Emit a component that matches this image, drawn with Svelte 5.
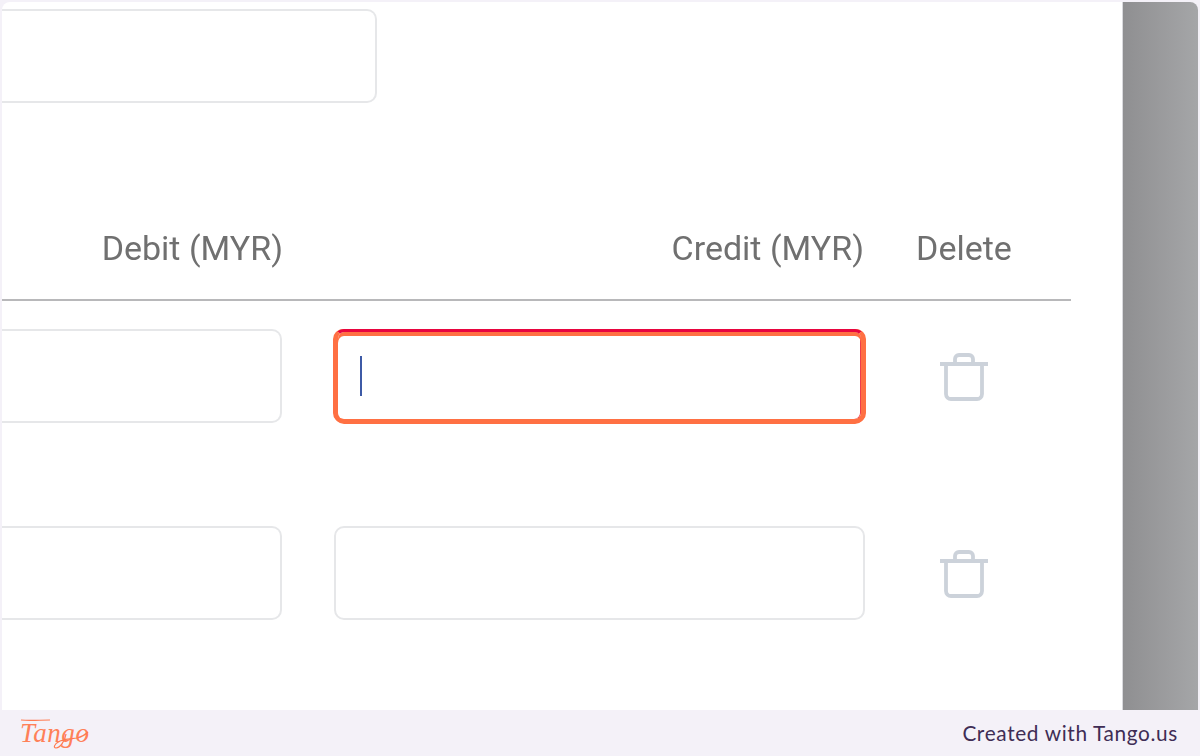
<script>
  // two blank entry rows, the first one has focus
  let rows = [{ focused: true }, { focused: false }];
</script>

<div class="shot">
  <div class="canvas">
    <main class="content">
      <div class="field top"></div>

      <div class="table">
        <div class="thead">
          <div class="th debit">Debit (MYR)</div>
          <div class="th credit">Credit (MYR)</div>
          <div class="th del">Delete</div>
        </div>

        {#each rows as row}
          <div class="row">
            <div class="field debitInput"></div>
            <div class="field creditInput" class:focused={row.focused}>
              {#if row.focused}
                <span class="caret"></span>
              {/if}
            </div>
            <div class="del">
              <svg class="trash" width="48" height="48" viewBox="0 0 48 48" fill="none" stroke="#ccd2da" stroke-width="3.8">
                <path d="M0 11h48" />
                <path d="M15 11V6a4 4 0 0 1 4-4h10a4 4 0 0 1 4 4v5" />
                <path d="M6 11v30a5 5 0 0 0 5 5h26a5 5 0 0 0 5-5V11" />
              </svg>
            </div>
          </div>
        {/each}
      </div>
    </main>
    <div class="scrim"></div>
  </div>

  <footer class="footer">
    <span class="logo">
      Tango
      <svg class="swash" width="70" height="34" viewBox="0 0 70 34" fill="none" stroke="#ff7a50" stroke-width="1.2">
        <path d="M1 4c9 1 19 0 29 0" />
        <path d="M46 18c-1 7-6 14-10 14-3 0-2-4 4-7 8-3 12-2 17-3 4-1 8-3 11-6" />
      </svg>
    </span>
    <span class="credit-line">Created with Tango.us</span>
  </footer>
</div>

<style>
  :global(body) {
    margin: 0;
    background: #f4f1f8;
  }

  .shot {
    width: 1200px;
    height: 756px;
    display: flex;
    flex-direction: column;
    background: #f4f1f8;
    overflow: hidden;
  }

  .canvas {
    flex: 1;
    display: flex;
    margin: 2px 2px 0 2px;
    border-radius: 8px 8px 0 0;
    overflow: hidden;
    min-height: 0;
  }

  .content {
    flex: 1;
    background: #fff;
    padding-top: 7px;
    min-width: 0;
  }

  .scrim {
    width: 75px;
    background: linear-gradient(90deg, #8f8f91 0%, #a5a6a8 100%);
    border-left: 1px solid #d9d9dd;
  }

  .field {
    box-sizing: border-box;
    height: 94px;
    border: 2px solid #e6e7e9;
    border-left: none;
    border-radius: 0 10px 10px 0;
    background: #fff;
  }

  .top {
    width: 375px;
    height: 94px;
  }

  .table {
    width: 1069px;
    margin-top: 99px;
  }

  .thead {
    display: grid;
    grid-template-columns: 332px 531px 206px;
    height: 97px;
    border-bottom: 2px solid #b8b8ba;
    font-family: Roboto, sans-serif;
    font-size: 34px;
    color: #707070;
  }

  .th {
    line-height: 92px;
    filter: blur(0.5px);
    white-space: nowrap;
  }

  .th.debit {
    width: 281px;
    text-align: right;
  }

  .th.credit {
    text-align: right;
    padding-right: 1px;
  }

  .del {
    text-align: center;
    padding-right: 8px;
  }

  .row {
    display: grid;
    grid-template-columns: 332px 531px 206px;
    height: 197px;
    padding-top: 28px;
    box-sizing: border-box;
    align-items: start;
  }

  .debitInput {
    width: 280px;
  }

  .creditInput {
    border-left: 2px solid #e6e7e9;
    border-radius: 10px;
    display: flex;
    align-items: center;
    padding-left: 24px;
  }

  .creditInput.focused {
    border: 4px solid #ff7043;
    border-top: 3px solid #e8043f;
    box-shadow:
      inset 0 4px 0 #ff7043,
      inset -1px 0 0 #ef3d4a,
      -1px 0 0 #ff7043,
      1px 0 0 #ff7043,
      0 1px 0 #ff7043;
    padding-left: 22px;
  }

  .caret {
    width: 2px;
    height: 40px;
    background: #3d5aa6;
  }

  .trash {
    display: block;
    margin: 24px auto 0;
  }

  .footer {
    height: 46px;
    display: flex;
    align-items: center;
    justify-content: space-between;
    padding: 0 22px 0 20px;
    flex-shrink: 0;
  }

  .logo {
    position: relative;
    font-family: "Liberation Serif", serif;
    font-style: italic;
    font-size: 27px;
    color: #ff8058;
    letter-spacing: 0.6px;
  }

  .swash {
    position: absolute;
    left: 0;
    top: -2px;
  }

  .credit-line {
    font-family: Lato, sans-serif;
    font-size: 20.8px;
    letter-spacing: 0.65px;
    color: #3f2d55;
    padding-bottom: 2px;
  }
</style>
